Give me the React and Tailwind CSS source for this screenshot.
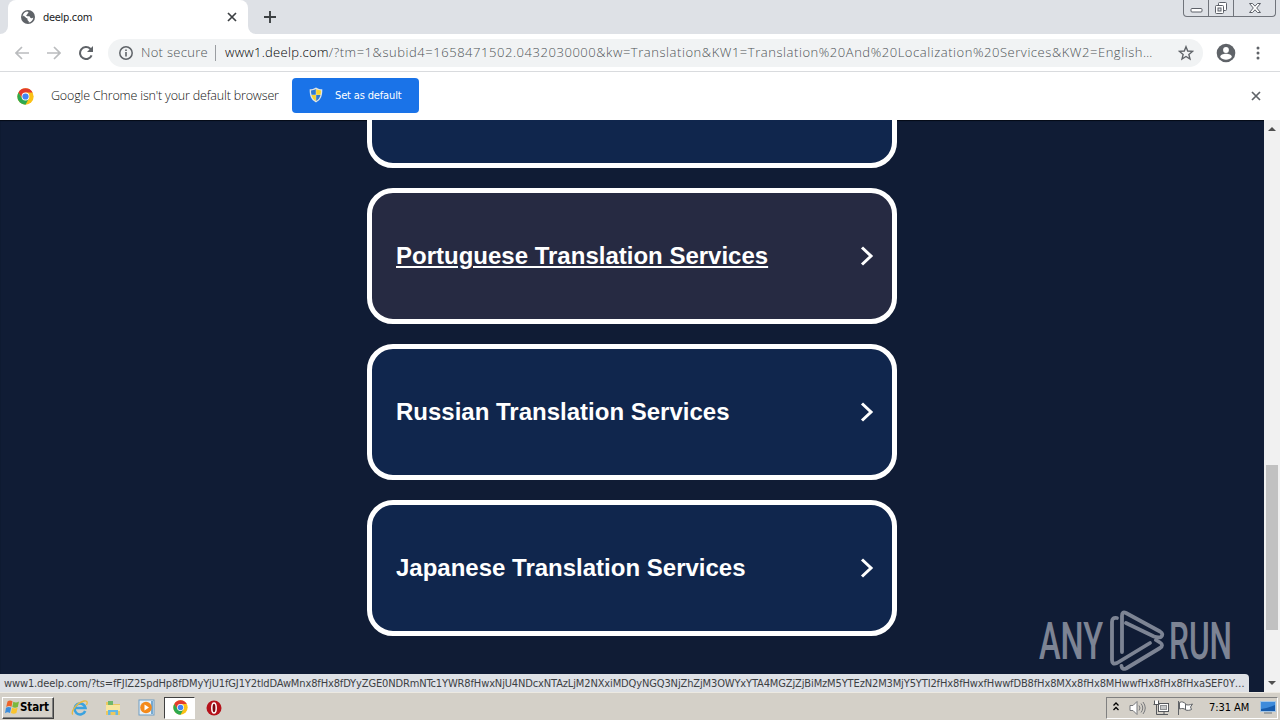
import React from "react";

// the first card is scrolled half out of view, only its lower edge shows
const services = [
  { name: "" },
  { name: "Portuguese Translation Services", hovered: true },
  { name: "Russian Translation Services" },
  { name: "Japanese Translation Services" },
];

const ChromeLogo = ({ size }) => (
  <svg width={size} height={size} viewBox="0 0 48 48" className="shrink-0">
    <circle cx="24" cy="24" r="23" fill="#fbc116" />
    <path d="M24 13 H44.2 A23 23 0 0 0 4.1 12.5 L14.5 29.5 Z" fill="#e33b2e" />
    <path d="M4.1 12.5 A23 23 0 0 0 24 47 L33.5 29.5 L24 34 L14.5 29.5 Z" fill="#2da94f" />
    <circle cx="24" cy="24" r="11" fill="#fff" />
    <circle cx="24" cy="24" r="8.8" fill="#4285f4" />
  </svg>
);

const CloseIcon = ({ size, color }) => (
  <svg width={size} height={size} viewBox="0 0 10 10" className="shrink-0">
    <path d="M1 1l8 8M9 1l-8 8" stroke={color} strokeWidth="1.7" />
  </svg>
);

const GlobeIcon = () => (
  <svg width="14" height="14" viewBox="0 0 14 14" className="shrink-0">
    <circle cx="7" cy="7" r="7" fill="#5f6368" />
    <path
      d="M6 1.5c2 .2 1.8 1 1 1.6-.6.5-.3 1.3-1.2 1.7-1 .4-.7 1.4.6 1.4h1.8c1 0 .6 1.6 1.7 1.7 1 .1 1 .9 2.4-.4-.1 2.5-2 4.7-4.6 5V11c-1.3-.2-1.5-.9-1.4-2.1L1.6 6.3C2 3.7 3.7 1.9 6 1.5z"
      fill="#fff"
    />
    <path d="M2.5 5.5l3 2.8 1 .2-.3 1.5 1 1.2v1.3C4.5 12.3 1.8 10 1.8 7z" fill="#5f6368" />
  </svg>
);

const ShieldIcon = () => (
  <svg width="14" height="16" viewBox="0 0 14 16" className="shrink-0">
    <path d="M7 .6C5 2 3 2.3.7 2.3.5 8.5 2 13 7 15.4 12 13 13.5 8.5 13.3 2.3 11 2.3 9 2 7 .6z" fill="#dfe5e8" />
    <path d="M6.8 2C5 3 3.7 3.3 2 3.4c0 1.7.1 3 .5 4.4h4.3z" fill="#2f7bd2" />
    <path d="M7.2 2c1.8 1 3.1 1.3 4.8 1.4 0 1.7-.1 3-.5 4.4H7.2z" fill="#f8d32c" />
    <path d="M2.5 8.1h4.3v5.9C4.5 12.7 3.1 10.7 2.5 8.1z" fill="#f8d32c" />
    <path d="M11.5 8.1H7.2v5.9c2.3-1.3 3.7-3.3 4.3-5.9z" fill="#2f7bd2" />
  </svg>
);

const TabStrip = () => (
  <div className="flex h-[34px] items-start bg-[#dee1e6]">
    <div className="h-[34px] w-2 bg-white">
      <div className="h-full rounded-br-lg bg-[#dee1e6]" />
    </div>
    <div className="flex h-[34px] w-[240px] items-center rounded-t-lg bg-white pl-[13px] pr-[11px]">
      <GlobeIcon />
      <span className="ml-2 flex-1 pt-0.5 text-[11px] tracking-[-0.3px] text-[#202124]">deelp.com</span>
      <CloseIcon size={10} color="#3c4043" />
    </div>
    <div className="h-[34px] w-2 bg-white">
      <div className="h-full rounded-bl-lg bg-[#dee1e6]" />
    </div>
    <svg width="12" height="12" viewBox="0 0 12 12" className="ml-2 mt-[11px]">
      <path d="M6 0v12M0 6h12" stroke="#3c4043" strokeWidth="1.9" />
    </svg>
    {/* window buttons */}
    <div className="ml-auto mr-1 flex h-[17px] w-[93px] rounded-b border border-t-0 border-[#70747b] text-[#5c6068]">
      <div className="flex w-[25px] justify-center border-r border-[#70747b]">
        <svg width="13" height="16" viewBox="0 0 13 16">
          <rect x="1" y="8.5" width="11" height="3.5" rx="1" fill="#fff" stroke="currentColor" />
        </svg>
      </div>
      <div className="flex w-[25px] justify-center border-r border-[#70747b]">
        <svg width="14" height="16" viewBox="0 0 14 16">
          <rect x="4.5" y="2.5" width="8" height="8" rx="1" fill="#fff" stroke="currentColor" />
          <rect x="1.5" y="5.5" width="8" height="8" rx="1" fill="#fff" stroke="currentColor" />
          <rect x="4" y="8" width="3" height="3" fill="#dee1e6" stroke="currentColor" />
        </svg>
      </div>
      <div className="flex flex-1 justify-center">
        <svg width="14" height="16" viewBox="0 0 14 16">
          <path
            d="M1.5 3.5h3L7 6.2l2.5-2.7h3L8.7 8l3.8 4.5h-3L7 9.8l-2.5 2.7h-3L5.3 8z"
            fill="#fff"
            stroke="currentColor"
          />
        </svg>
      </div>
    </div>
  </div>
);

const Toolbar = () => (
  <div className="flex h-[38px] items-center border-b border-[#d9dbde] bg-white">
    <svg width="14" height="14" viewBox="0 0 14 14" className="ml-[15px]">
      <path d="M14 7H1.5M7 1L1 7l6 6" fill="none" stroke="#babcbe" strokeWidth="1.7" />
    </svg>
    <svg width="14" height="14" viewBox="0 0 14 14" className="ml-[18px]">
      <path d="M0 7h12.5M7 1l6 6-6 6" fill="none" stroke="#babcbe" strokeWidth="1.7" />
    </svg>
    <svg width="14" height="14" viewBox="0 0 14 14" className="ml-[18px]">
      <path d="M12.6 9.3A6 6 0 1 1 11.3 2.8L12.3 4" fill="none" stroke="#5f6368" strokeWidth="2" />
      <path d="M14 0v6H8z" fill="#5f6368" />
    </svg>
    <div className="ml-[15px] flex h-7 w-[1095px] items-center rounded-full bg-[#f1f3f4] pl-[11px] pr-[10px]">
      <svg width="14" height="14" viewBox="0 0 14 14" className="shrink-0">
        <circle cx="7" cy="7" r="6.2" fill="none" stroke="#5f6368" strokeWidth="1.5" />
        <path d="M7 6v4.5M7 3.4V5" stroke="#5f6368" strokeWidth="1.6" />
      </svg>
      <span className="ml-2 w-[67px] whitespace-nowrap font-['Open_Sans',sans-serif] text-[13px] font-light tracking-[0.3px] text-[#4f5357]">
        Not secure
      </span>
      <span className="ml-[7px] h-4 w-px shrink-0 bg-[#9a9da1]" />
      <span className="ml-[9px] whitespace-nowrap font-['Open_Sans',sans-serif] text-[13px] font-light tracking-[0.55px] text-[#4f5357]">
        <span className="tracking-[0.28px] text-black">www1.deelp.com</span>
        /?tm=1&amp;subid4=1658471502.0432030000&amp;kw=Translation&amp;KW1=Translation%20And%20Localization%20Services&amp;KW2=English…
      </span>
      <svg width="16" height="16" viewBox="0 0 14 14" className="-mr-px ml-auto shrink-0">
        <path
          d="M7 1.5l1.5 3.8 4.2.3-3.2 2.7 1 4L7 10.1l-3.5 2.2 1-4L1.3 5.6l4.2-.3z"
          fill="none"
          stroke="#5f6368"
          strokeWidth="1.2"
        />
      </svg>
    </div>
    <svg width="20" height="20" viewBox="0 0 20 20" className="ml-[13px]">
      <circle cx="10" cy="10" r="9.3" fill="#5f6368" />
      <circle cx="10" cy="7" r="2.9" fill="#fff" />
      <path d="M4.2 14c0-4.2 11.6-4.2 11.6 0-2.5 3.5-9.1 3.5-11.6 0z" fill="#fff" />
    </svg>
    <svg width="4" height="14" viewBox="0 0 4 14" className="ml-5">
      <circle cx="2" cy="2" r="1.5" fill="#5f6368" />
      <circle cx="2" cy="7" r="1.5" fill="#5f6368" />
      <circle cx="2" cy="12" r="1.5" fill="#5f6368" />
    </svg>
  </div>
);

const InfoBar = () => (
  <div className="flex h-12 items-center bg-white pl-[17px] pr-[19px]">
    <ChromeLogo size={17} />
    <span className="ml-[17px] w-[229px] whitespace-nowrap font-['Open_Sans',sans-serif] text-[12.5px] font-light tracking-[-0.17px] text-[#111]">
      Google Chrome isn't your default browser
    </span>
    <button className="mb-0.5 ml-3 flex h-[35px] w-[127px] items-center rounded bg-[#1a73e8] pl-[17px] text-[11px] text-white">
      <ShieldIcon />
      <span className="ml-3 whitespace-nowrap pt-0.5 tracking-[-0.15px]">Set as default</span>
    </button>
    <div className="ml-auto">
      <CloseIcon size={10} color="#5f6368" />
    </div>
  </div>
);

const ServiceCard = ({ name, hovered }) => (
  <div
    className={`flex h-[136px] w-[530px] shrink-0 items-center justify-between rounded-[26px] border-[5px] border-white pl-6 pr-[18px] text-white ${
      hovered ? "bg-[#262a42]" : "bg-[#10264d]"
    }`}
  >
    <span
      className={`whitespace-nowrap font-['Liberation_Sans',Arial,sans-serif] text-2xl font-bold ${
        hovered ? "underline decoration-2 underline-offset-2" : ""
      }`}
    >
      {name}
    </span>
    <svg width="14" height="20" viewBox="0 0 14 20">
      <path d="M2 1.5l9 8.5-9 8.5" fill="none" stroke="#fff" strokeWidth="3" />
    </svg>
  </div>
);

const ScrollBar = () => (
  <div className="flex w-4 flex-col items-center bg-[#f1f1f1]">
    <svg width="8" height="4" viewBox="0 0 8 4" className="mt-[7px]">
      <path d="M0 4l4-4 4 4z" fill="#505050" />
    </svg>
    <div className="mt-[334px] h-[165px] w-3 bg-[#c1c1c1]" />
    <svg width="8" height="4" viewBox="0 0 8 4" className="mb-[7px] mt-auto">
      <path d="M0 0l4 4 4-4z" fill="#505050" />
    </svg>
  </div>
);

const Watermark = () => (
  <div className="absolute bottom-5 right-[46px] opacity-55">
    <svg width="196" height="64" viewBox="0 0 196 64" overflow="visible">
      <g fill="#d7dae2" fontFamily="Roboto, sans-serif" fontSize="51" fontWeight="500">
        <text x="1" y="51" textLength="64" lengthAdjust="spacingAndGlyphs">ANY</text>
        <text x="131" y="51" textLength="63" lengthAdjust="spacingAndGlyphs">RUN</text>
      </g>
      <g fill="none" stroke="#d7dae2" strokeWidth="3.8" strokeLinejoin="round" strokeLinecap="round">
        <path d="M79 10Q74 9 74 14V52Q74 57 79 55L112 35" />
        <path d="M84 44V8Q84 3 88 5L122 23.5Q126 26 123 29Q120 30 116 28.5L88 15" />
        <path d="M118 32L122 34.5Q126 37 122 40L88 60.5Q84 62 83.5 58" />
      </g>
    </svg>
  </div>
);

const StartFlag = () => (
  <svg width="15" height="15" viewBox="0 0 15 15" className="shrink-0">
    <path d="M2.5 1.5C4 .3 5.8.3 7.5 1.3L6.5 6.7C4.8 5.8 3 5.8 1.2 7z" fill="#ed632a" />
    <path d="M8.3 1.7c1.9 1 3.7.9 5.7-.2l-1.2 5.4c-1.9 1-3.6 1-5.5 0z" fill="#7bb83e" />
    <path d="M1 7.8c1.7-1.1 3.5-1.1 5.2-.2L5 13c-1.7-.9-3.3-.9-5 .2z" fill="#3b8ddd" />
    <path d="M7.1 7.8c1.9 1 3.7.9 5.5 0l-1.2 5.3c-1.8 1-3.6 1-5.5 0z" fill="#fac42e" />
  </svg>
);

const Taskbar = () => (
  <div className="flex h-7 items-center border-t border-[#ece9e2] bg-[#d4d0c8] pl-0.5 pr-0.5 pt-0.5">
    <button className="flex h-[22px] w-[52px] items-center border border-b-[#404040] border-l-white border-r-[#404040] border-t-white pl-0.5 shadow-[inset_-1px_-1px_0_#808080]">
      <StartFlag />
      <span className="text-[11.5px] font-bold tracking-[-0.1px] text-black">Start</span>
    </button>
    {/* internet explorer */}
    <svg width="18" height="18" viewBox="0 0 18 18" className="ml-[17px]">
      <path d="M14.2 12A5.5 5.5 0 1 1 14.5 9H5" fill="none" stroke="#3ba2df" strokeWidth="2.6" />
      <path d="M2 15.5C-1 14 5 4 13 2c4-.8 3.5 2 2.5 4" fill="none" stroke="#e8b93f" strokeWidth="1.3" />
    </svg>
    {/* explorer folder */}
    <svg width="18" height="18" viewBox="0 0 18 18" className="ml-[15px]">
      <path d="M2 3h6l1 2h7v11H2z" fill="#ecc85f" />
      <path d="M4 2h5v4H4z" fill="#70b76a" />
      <path d="M2 6h14v6H2z" fill="#f8e69e" />
      <path d="M4 16v-5h10v5h-2.5v-3h-5v3z" fill="#62b8e5" />
    </svg>
    {/* media player */}
    <svg width="17" height="17" viewBox="0 0 17 17" className="ml-4">
      <rect x="1" y="1" width="15" height="15" fill="#e8f1f8" stroke="#6e9dc4" />
      <rect x="13" y="2" width="2" height="13" fill="#75a9d1" />
      <circle cx="8" cy="8.5" r="5.8" fill="#f48a1b" />
      <path d="M6.5 5.5v6l4.5-3z" fill="#fff" />
    </svg>
    <div className="ml-[9px] flex h-[22px] w-[31px] items-center justify-center border border-b-white border-l-[#404040] border-r-white border-t-[#404040] bg-white pl-0.5">
      <ChromeLogo size={15} />
    </div>
    {/* opera */}
    <svg width="16" height="16" viewBox="0 0 16 16" className="ml-[11px]">
      <circle cx="8" cy="8" r="7.5" fill="#b5121b" />
      <ellipse cx="8" cy="8" rx="2.2" ry="5" fill="#7d0710" stroke="#fff" strokeWidth="1.5" />
    </svg>
    <div className="ml-auto flex h-[22px] w-[172px] items-center border border-b-white border-l-[#808080] border-r-white border-t-[#808080]">
      <svg width="6" height="9" viewBox="0 0 6 9" className="mb-0.5 ml-1.5 shrink-0">
        <path d="M.5 3.5L3 1l2.5 2.5M.5 8L3 5.5 5.5 8" fill="none" stroke="#000" strokeWidth="1.3" />
      </svg>
      <svg width="17" height="16" viewBox="0 0 17 16" className="ml-2.5 shrink-0" fill="none" stroke="#77797c">
        <path d="M1 5.5h3l4-4v13l-4-4H1z" fill="#fff" />
        <path d="M10 5.5q2 2.5 0 5M12 3.5q3.5 4.5 0 9M14 2q4.5 6 0 12" />
      </svg>
      <svg width="16" height="16" viewBox="0 0 16 16" className="ml-[7px] shrink-0" fill="none" stroke="#55585c">
        <rect x="5.5" y="3.5" width="10" height="8" fill="#fff" />
        <rect x="7.5" y="5.5" width="6" height="4" fill="#c5c7c8" stroke="#8d9093" />
        <path d="M8 14.5h7M11 12v2M3.5 5v9.5H8" />
        <path d="M1.5.5v4h4v-4M.5 4.5h6" fill="#fff" />
      </svg>
      <svg width="17" height="16" viewBox="0 0 17 16" className="ml-2 shrink-0" fill="#fff" stroke="#606367">
        <path d="M2.5 2.5c3-1.5 4 0 6 1v6c-2-1-3-1.5-6-.5z" />
        <path d="M8.5 4.5c2 .7 4 .7 7-.5l-2 3 1 2.5c-2 1-4 1-6 .5z" />
        <path d="M1.5 1v14" />
      </svg>
      <span className="ml-[15px] w-[43px] whitespace-nowrap pt-0.5 text-[11px] tracking-[-0.05px] text-black">7:31 AM</span>
      <svg width="16" height="14" viewBox="0 0 16 14" className="mb-0.5 ml-2 shrink-0">
        <rect x=".5" y="1.5" width="15" height="10" fill="#175cad" stroke="#a3c5e5" />
        <path d="M1 2h14v3Q8 8 1 9z" fill="#3e8bdb" />
        <path d="M4 13h8" stroke="#68757f" />
      </svg>
    </div>
  </div>
);

export default function App() {
  return (
    <div className="flex h-[720px] w-[1280px] flex-col overflow-hidden font-['DejaVu_Sans_Condensed','DejaVu_Sans',sans-serif]">
      <TabStrip />
      <Toolbar />
      <InfoBar />
      <main className="relative flex h-[572px] bg-[#101c35] shadow-[inset_0_1px_1px_#050b16]">
        <div className="flex flex-1 flex-col items-center justify-end gap-5 overflow-hidden pb-14">
          {services.map((s, i) => (
            <ServiceCard key={i} name={s.name} hovered={s.hovered} />
          ))}
        </div>
        <ScrollBar />
        <Watermark />
        {/* link status bubble */}
        <div className="absolute bottom-0 left-0 flex h-[18px] w-[1249px] items-center rounded-tr bg-[#dee1e6] pl-1 pt-0.5">
          <span className="whitespace-nowrap text-[11px] tracking-[-0.13px] text-[#3c4043]">
            www1.deelp.com/?ts=fFJlZ25pdHp8fDMyYjU1fGJ1Y2tldDAwMnx8fHx8fDYyZGE0NDRmNTc1YWR8fHwxNjU4NDcxNTAzLjM2NXxiMDQyNGQ3NjZhZjM3OWYxYTA4MGZjZjBiMzM5YTEzN2M3MjY5YTI2fHx8fHwxfHwwfDB8fHx8MXx8fHx8MHwwfHx8fHx8fHxaSEF0Y…
          </span>
        </div>
      </main>
      <Taskbar />
    </div>
  );
}
